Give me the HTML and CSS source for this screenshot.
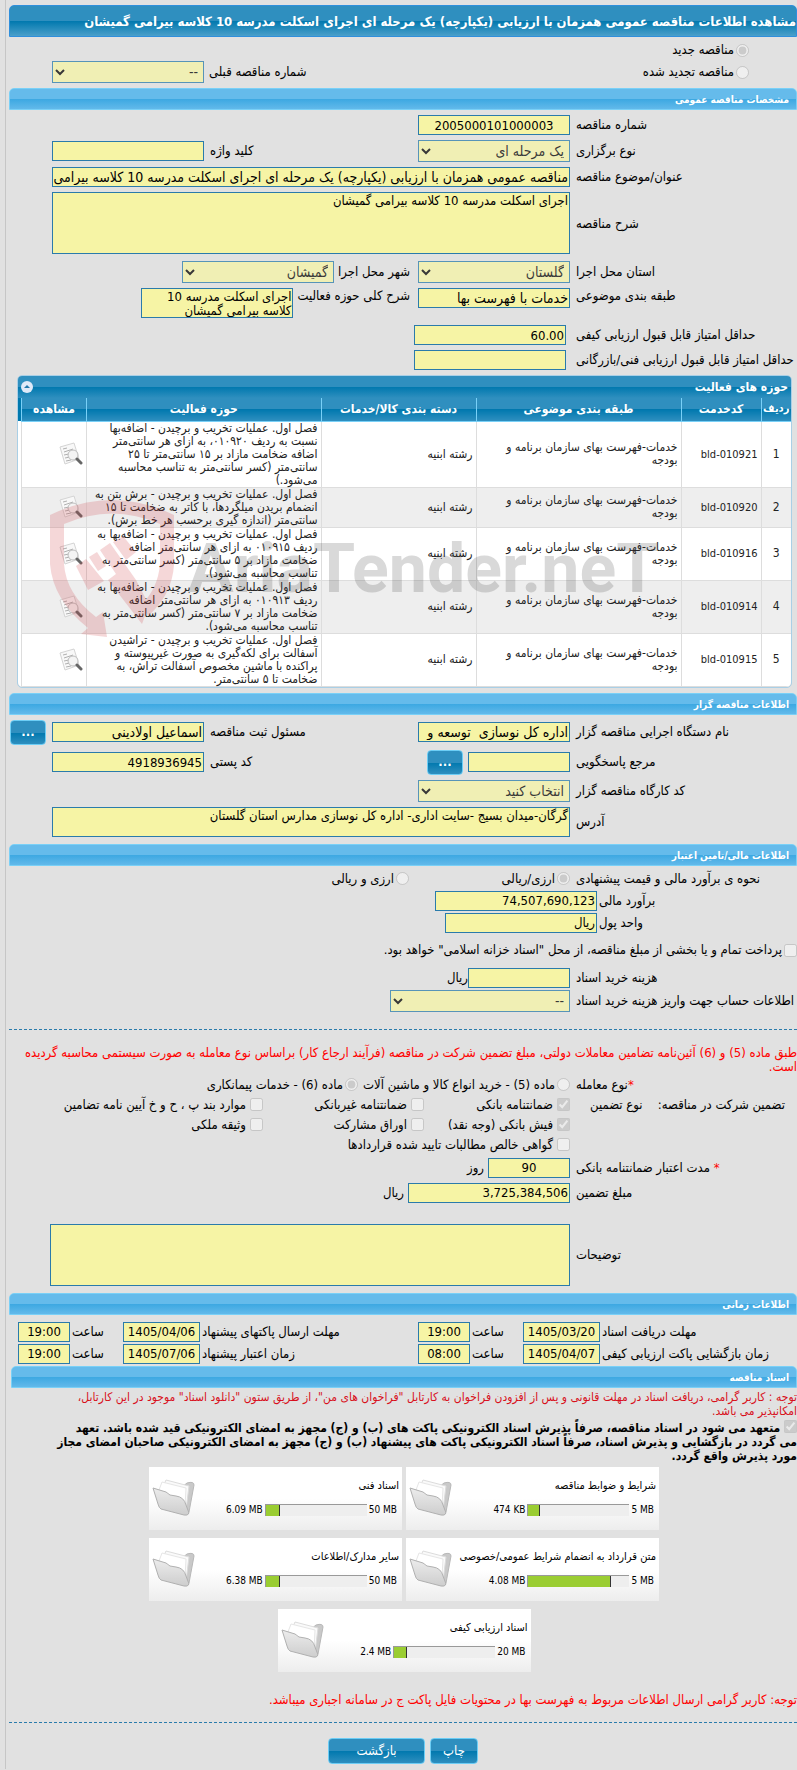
FILE: index.html
```html
<!DOCTYPE html>
<html lang="fa" dir="rtl">
<head>
<meta charset="utf-8">
<meta name="viewport" content="width=device-width, initial-scale=1">
<title>مشاهده اطلاعات مناقصه عمومی</title>
<link rel="stylesheet" href="styles.css">
</head>
<body>
<svg class="defs" width="0" height="0" aria-hidden="true">
  <defs>
    <linearGradient id="fold" x1="0" y1="0" x2="0" y2="1"><stop offset="0" stop-color="#ececec"/><stop offset="1" stop-color="#cdcdcd"/></linearGradient>
    <symbol id="folder" viewBox="0 0 44 40">
      <path d="M30 8 35 4Q42 2 42 6L37 33 34 36 28 30Z" fill="#c9c9c9" stroke="#b8b8b8"/>
      <path d="M10 10 14 1 37 7 34 31 14 26Z" fill="#fafafa" stroke="#dcdcdc"/>
      <path d="M7 11 10 3 34 9 33 28Z" fill="#fff" stroke="#e6e6e6"/>
      <path d="M1 9 14 13Q17 17 24 17 32 18 34 26L37 34Q36 37 32 36L9 30Q7 29 6 25Z" fill="url(#fold)" stroke="#b0b0b0"/>
    </symbol>
    <symbol id="view" viewBox="0 0 24 24">
      <path d="M1 5 15 1 20 17 6 22Z" fill="#f8f8f8" stroke="#d4d4d4"/>
      <path d="M4 7 8 6M5 10 14 7M5 13 10 12M6 16 11 15M7 19 12 18" stroke="#b0b0b0" fill="none"/>
      <circle cx="14" cy="13" r="5" fill="#f2f2f2" fill-opacity=".8" stroke="#bdbdbd"/>
      <path d="M18 17 22 21" stroke="#666" stroke-width="3" stroke-linecap="round"/>
    </symbol>
  </defs>
</svg>
<main class="page">
  <h1 class="title">مشاهده اطلاعات مناقصه عمومی همزمان با ارزیابی (یکپارچه) یک مرحله ای اجرای اسکلت مدرسه 10 کلاسه بیرامی گمیشان</h1>

  <section class="kind">
    <label class="opt"><input type="radio" name="kind" checked disabled>مناقصه جدید</label>
    <div class="kind-row">
      <label class="opt"><input type="radio" name="kind" disabled>مناقصه تجدید شده</label>
      <label class="push" for="prev">شماره مناقصه قبلی</label>
      <select class="w-field" id="prev" disabled><option>--</option></select>
    </div>
  </section>

  <h2 class="bar">مشخصات مناقصه عمومی</h2>
  <section class="form">
    <div class="row"><label for="num">شماره مناقصه</label><input class="center" id="num" value="2005000101000003" readonly></div>
    <div class="row">
      <label for="type">نوع برگزاری</label><select id="type" disabled><option>یک مرحله ای</option></select>
      <label for="key">کلید واژه</label><input id="key" readonly>
    </div>
    <div class="row"><label for="subj">عنوان/موضوع مناقصه</label><input class="wide fa" id="subj" value="مناقصه عمومی همزمان با ارزیابی (یکپارچه) یک مرحله ای اجرای اسکلت مدرسه 10 کلاسه بیرامی گمیشان" readonly></div>
    <div class="row"><label for="desc">شرح مناقصه</label><textarea class="wide tall" id="desc" readonly>اجرای اسکلت مدرسه 10 کلاسه بیرامی گمیشان</textarea></div>
    <div class="row">
      <label for="prov">استان محل اجرا</label><select id="prov" disabled><option>گلستان</option></select>
      <div class="rest"><label for="city">شهر محل اجرا</label><select class="w-field" id="city" disabled><option>گمیشان</option></select></div>
    </div>
    <div class="row top">
      <label for="class">طبقه بندی موضوعی</label><input class="fa" id="class" value="خدمات با فهرست بها" readonly>
      <div class="rest top"><label for="scope">شرح کلی حوزه فعالیت</label><textarea class="w-field" id="scope" readonly>اجرای اسکلت مدرسه 10 کلاسه بیرامی گمیشان</textarea></div>
    </div>
    <div class="row score"><label for="q1">حداقل امتیاز قابل قبول ارزیابی کیفی</label><input id="q1" value="60.00" readonly></div>
    <div class="row score"><label for="q2">حداقل امتیاز قابل قبول ارزیابی فنی/بازرگانی</label><input id="q2" readonly></div>
  </section>

  <section class="panel">
    <header class="panel-head">
      <h2>حوزه های فعالیت</h2>
      <button class="fold" type="button" aria-label="بستن"><svg width="12" height="12" viewBox="0 0 12 12"><circle cx="6" cy="6" r="6" fill="#dfe9f8"/><path d="M3 7 6 4 9 7Z" fill="#2277aa"/></svg></button>
    </header>
    <div class="grid-wrap">
      <table class="areas">
        <colgroup><col class="c1"><col class="c2"><col class="c3"><col class="c4"><col class="c5"><col class="c6"></colgroup>
        <thead><tr><th>ردیف</th><th>کدخدمت</th><th>طبقه بندی موضوعی</th><th>دسته بندی کالا/خدمات</th><th>حوزه فعالیت</th><th>مشاهده</th></tr></thead>
        <tbody>
          <tr><td>1</td><td>bld-010921</td><td>خدمات-فهرست بهای سازمان برنامه و<br>بودجه</td><td>رشته ابنیه</td><td>فصل اول. عملیات تخریب و برچیدن - اضافه‌بها<br>نسبت به ردیف ۰۱۰۹۲۰، به ازای هر سانتی‌متر<br>اضافه ضخامت مازاد بر ۱۵ سانتی‌متر تا ۲۵<br>سانتی‌متر (کسر سانتی‌متر به تناسب محاسبه<br>می‌شود.)</td><td><svg class="doc"><use href="#view"/></svg></td></tr>
          <tr><td>2</td><td>bld-010920</td><td>خدمات-فهرست بهای سازمان برنامه و<br>بودجه</td><td>رشته ابنیه</td><td>فصل اول. عملیات تخریب و برچیدن - برش بتن به<br>انضمام بریدن میلگردها، با کاتر به ضخامت تا ۱۵<br>سانتی‌متر (اندازه گیری برحسب هر خط برش).</td><td><svg class="doc"><use href="#view"/></svg></td></tr>
          <tr><td>3</td><td>bld-010916</td><td>خدمات-فهرست بهای سازمان برنامه و<br>بودجه</td><td>رشته ابنیه</td><td>فصل اول. عملیات تخریب و برچیدن - اضافه‌بها به<br>ردیف ۰۱۰۹۱۵ به ازای هر سانتی‌متر اضافه<br>ضخامت مازاد بر ۵ سانتی‌متر (کسر سانتی‌متر به<br>تناسب محاسبه می‌شود).</td><td><svg class="doc"><use href="#view"/></svg></td></tr>
          <tr><td>4</td><td>bld-010914</td><td>خدمات-فهرست بهای سازمان برنامه و<br>بودجه</td><td>رشته ابنیه</td><td>فصل اول. عملیات تخریب و برچیدن - اضافه‌بها به<br>ردیف ۰۱۰۹۱۳ به ازای هر سانتی‌متر اضافه<br>ضخامت مازاد بر ۷ سانتی‌متر (کسر سانتی‌متر به<br>تناسب محاسبه می‌شود).</td><td><svg class="doc"><use href="#view"/></svg></td></tr>
          <tr><td>5</td><td>bld-010915</td><td>خدمات-فهرست بهای سازمان برنامه و<br>بودجه</td><td>رشته ابنیه</td><td>فصل اول. عملیات تخریب و برچیدن - تراشیدن<br>آسفالت برای لکه‌گیری به صورت غیرپیوسته و<br>پراکنده با ماشین مخصوص آسفالت تراش، به<br>ضخامت تا ۵ سانتی‌متر.</td><td><svg class="doc"><use href="#view"/></svg></td></tr>
        </tbody>
      </table>
    </div>
    <div class="mark" dir="ltr">
      <svg width="124" height="138" viewBox="0 0 124 138" fill="#cf3b42">
        <path d="M0 15Q62-15 124 15V65Q122 95 98 116L92 104Q108 88 110 64V24Q62 3 14 24V64Q16 94 46 117L53 112 57 137 31 134 38 128Q3 100 0 64Z"/>
        <path d="M26 66 36 59 54 81 38 90ZM39 57 47 52 56 66 48 71ZM50 50 60 43 86 80 99 105 92 124 58 80 66 74ZM63 42 73 36 86 52 76 60Z"/>
      </svg>
      <span>AriaTender.neT</span>
    </div>
  </section>

  <h2 class="bar">اطلاعات مناقصه گزار</h2>
  <section class="form org">
    <div class="row">
      <label for="org">نام دستگاه اجرایی مناقصه گزار</label><input class="fa" id="org" value="اداره کل نوسازی  توسعه و" readonly>
      <label for="who">مسئول ثبت مناقصه</label><input class="fa" id="who" value="اسماعیل اولادینی" readonly>
      <button class="btn dots" type="button">...</button>
    </div>
    <div class="row">
      <label for="ref">مرجع پاسخگویی</label>
      <div class="pair"><input class="w-ref" id="ref" readonly><button class="btn dots" type="button">...</button></div>
      <label for="zip">کد پستی</label><input id="zip" value="4918936945" readonly>
    </div>
    <div class="row"><label for="shop">کد کارگاه مناقصه گزار</label><select id="shop" disabled><option>انتخاب کنید</option></select></div>
    <div class="row"><label for="addr">آدرس</label><textarea class="wide" id="addr" readonly>گرگان-میدان بسیج -سایت اداری- اداره کل نوسازی مدارس استان گلستان</textarea></div>
  </section>

  <h2 class="bar">اطلاعات مالی/تامین اعتبار</h2>
  <section class="money">
    <div class="line"><span class="lab">نحوه ی برآورد مالی و قیمت پیشنهادی</span>
      <div class="opts"><label class="opt"><input type="radio" name="cur" checked disabled>ارزی/ریالی</label><label class="opt"><input type="radio" name="cur" disabled>ارزی و ریالی</label></div></div>
    <div class="line near"><label class="lab" for="est">برآورد مالی</label><input class="w-est" id="est" value="74,507,690,123" readonly></div>
    <div class="line near"><label class="lab" for="unit">واحد پول</label><input class="w-field" id="unit" value="ریال" readonly></div>
    <label class="opt bond"><input type="checkbox" disabled>پرداخت تمام و یا بخشی از مبلغ مناقصه، از محل "اسناد خزانه اسلامی" خواهد بود.</label>
    <div class="line"><label class="lab" for="fee">هزینه خرید اسناد</label><div class="unit"><input class="w-ref" id="fee" readonly>ریال</div></div>
    <div class="line"><label class="lab" for="acc">اطلاعات حساب جهت واریز هزینه خرید اسناد</label><select class="w-acc" id="acc" disabled><option>--</option></select></div>
  </section>

  <hr>
  <p class="note rule">طبق ماده (5) و (6) آئین‌نامه تضامین معاملات دولتی، مبلغ تضمین شرکت در مناقصه (فرآیند ارجاع کار) براساس نوع معامله به صورت سیستمی محاسبه گردیده<br>است.</p>

  <section class="bail">
    <div class="line"><span class="lab"><b class="star">*</b>نوع معامله</span>
      <div class="opts deal"><label class="opt"><input type="radio" name="deal" disabled>ماده (5) - خرید انواع کالا و ماشین آلات</label><label class="opt"><input type="radio" name="deal" checked disabled>ماده (6) - خدمات پیمانکاری</label></div></div>
    <div class="checks">
      <span class="lead"><span>تضمین شرکت در مناقصه:</span><span>نوع تضمین</span></span>
      <div class="boxes">
        <label class="opt"><input type="checkbox" checked disabled>ضمانتنامه بانکی</label>
        <label class="opt"><input type="checkbox" disabled>ضمانتنامه غیربانکی</label>
        <label class="opt"><input type="checkbox" disabled>موارد بند پ ، ح و خ آیین نامه تضامین</label>
        <label class="opt"><input type="checkbox" checked disabled>فیش بانکی (وجه نقد)</label>
        <label class="opt"><input type="checkbox" disabled>اوراق مشارکت</label>
        <label class="opt"><input type="checkbox" disabled>وثیقه ملکی</label>
        <label class="opt all"><input type="checkbox" disabled>گواهی خالص مطالبات تایید شده قراردادها</label>
      </div>
    </div>
    <div class="line"><label class="lab" for="days"><b class="star">*</b>&nbsp;مدت اعتبار ضمانتنامه بانکی</label><div class="unit gap"><input class="w-days center" id="days" value="90" readonly>روز</div></div>
    <div class="line"><label class="lab" for="amount">مبلغ تضمین</label><div class="unit gap"><input class="w-est" id="amount" value="3,725,384,506" readonly>ریال</div></div>
    <div class="line remark"><label class="lab" for="remark">توضیحات</label><textarea class="tall" id="remark" readonly></textarea></div>
  </section>

  <h2 class="bar">اطلاعات زمانی</h2>
  <section class="times">
    <label for="d1">مهلت دریافت اسناد</label><input id="d1" value="1405/03/20" readonly><label for="t1">ساعت</label><input id="t1" value="19:00" readonly>
    <label for="d2">مهلت ارسال پاکتهای پیشنهاد</label><input id="d2" value="1405/04/06" readonly><label for="t2">ساعت</label><input id="t2" value="19:00" readonly>
    <label for="d3">زمان بازگشایی پاکت ارزیابی کیفی</label><input id="d3" value="1405/04/07" readonly><label for="t3">ساعت</label><input id="t3" value="08:00" readonly>
    <label for="d4">زمان اعتبار پیشنهاد</label><input id="d4" value="1405/07/06" readonly><label for="t4">ساعت</label><input id="t4" value="19:00" readonly>
  </section>

  <section class="docs">
    <h2 class="bar">اسناد مناقصه</h2>
    <p class="note crimson">توجه : کاربر گرامی، دریافت اسناد در مهلت قانونی و پس از افزودن فراخوان به کارتابل "فراخوان های من"، از طریق ستون "دانلود اسناد" موجود در این کارتابل،<br>امکانپذیر می باشد.</p>
    <label class="pledge"><input type="checkbox" checked disabled> متعهد می شود در اسناد مناقصه، صرفاً پذیرش اسناد الکترونیکی پاکت های (ب) و (ج) مجهز به امضای الکترونیکی قید شده باشد. تعهد<br>می گردد در بازگشایی و پذیرش اسناد، صرفاً اسناد الکترونیکی پاکت های پیشنهاد (ب) و (ج) مجهز به امضای الکترونیکی صاحبان امضای مجاز<br>مورد پذیرش واقع گردد.</label>
    <div class="cards">
      <article class="card"><div class="info"><h3>شرایط و ضوابط مناقصه</h3><div class="usage"><span dir="ltr">5 MB</span><div class="meter"><i style="width:11%"></i></div><span dir="ltr">474 KB</span></div></div><svg class="folder"><use href="#folder"/></svg></article>
      <article class="card"><div class="info"><h3>اسناد فنی</h3><div class="usage"><span dir="ltr">50 MB</span><div class="meter"><i style="width:14%"></i></div><span dir="ltr">6.09 MB</span></div></div><svg class="folder"><use href="#folder"/></svg></article>
      <article class="card"><div class="info"><h3>متن قرارداد به انضمام شرایط عمومی/خصوصی</h3><div class="usage"><span dir="ltr">5 MB</span><div class="meter"><i style="width:82%"></i></div><span dir="ltr">4.08 MB</span></div></div><svg class="folder"><use href="#folder"/></svg></article>
      <article class="card"><div class="info"><h3>سایر مدارک/اطلاعات</h3><div class="usage"><span dir="ltr">50 MB</span><div class="meter"><i style="width:14%"></i></div><span dir="ltr">6.38 MB</span></div></div><svg class="folder"><use href="#folder"/></svg></article>
      <article class="card"><div class="info"><h3>اسناد ارزیابی کیفی</h3><div class="usage"><span dir="ltr">20 MB</span><div class="meter"><i style="width:13%"></i></div><span dir="ltr">2.4 MB</span></div></div><svg class="folder"><use href="#folder"/></svg></article>
    </div>
    <p class="note last">توجه: کاربر گرامی ارسال اطلاعات مربوط به فهرست بها در محتویات فایل پاکت ج در سامانه اجباری میباشد.</p>
  </section>
  <hr>
  <footer class="actions"><button class="btn print" type="button">چاپ</button><button class="btn back" type="button">بازگشت</button></footer>
</main>
</body>
</html>
```
FILE: styles.css
```css
* { box-sizing: border-box; }
body {
  margin: 0;
  background: #e1e1e1;
  color: #000;
  font: 13px/14px "DejaVu Sans Condensed", "DejaVu Sans", sans-serif;
}
.defs { position: absolute; }
.page {
  margin-left: 5px;
  padding: 5px 0 5px 3px;
  border-left: 1px solid #c6c6c6;
  overflow: hidden;
}
h1, h2, h3, p { margin: 0; }
input, select, textarea, button { font: 13px/14px "DejaVu Sans Condensed", "DejaVu Sans", sans-serif; margin: 0; }
input:not([type]), textarea {
  display: block;
  min-width: 0;
  height: 20px;
  padding: 1px;
  border: 1px solid #2a7bab;
  border-radius: 0;
  background: #f6f4a5;
  color: #000;
  outline: 0;
}
textarea { height: 30px; resize: none; overflow: hidden; }
input.fa:not([type]), select { font-size: 14px; }
textarea.tall { height: 62px; }
select {
  height: 22px;
  min-width: 0;
  padding: 0 1px;
  border: 1px solid #2a7bab;
  border-radius: 0;
  background-color: #f6f4a5;
  color: #000;
  opacity: .75;
}
input[type=radio], input[type=checkbox] { width: 13px; height: 13px; flex: none; }
.center { text-align: center; }
.w-field { width: 152px; }
.w-ref { width: 102px; }
.w-est { width: 162px; }
.w-acc { width: 180px; }
.w-days { width: 82px; }

.title {
  height: 32px;
  border: 1px solid #2f8fdc;
  border-radius: 5px 5px 0 0;
  background: linear-gradient(#2f8fbf 50%, #0078ae 50%, #4a9fca);
  color: #fff;
  font-size: 13px;
  line-height: 32px;
  white-space: nowrap;
}
.bar {
  height: 22px;
  padding: 0 7px;
  border: 1px solid #79d0f7;
  border-radius: 5px 5px 0 0;
  background: linear-gradient(#65bbeb 50%, #3ca8e2 50%, #62b9ea);
  color: #fff;
  font-size: 10px;
  line-height: 22px;
}
.opt { display: flex; align-items: center; gap: 2px; white-space: nowrap; }

.kind { padding: 2px 48px 5px 43px; }
.kind > .opt { height: 22px; }
.kind-row { display: flex; align-items: center; gap: 5px; }
.kind-row .push { margin-right: auto; }

.form { display: flex; flex-direction: column; gap: 5px; padding: 5px 0; }
.row {
  display: grid;
  grid-template-columns: 221fr 152px 202fr 152px 37px;
  gap: 6px;
  align-items: center;
}
.row > label, .lab { display: flex; justify-content: flex-end; white-space: nowrap; }
.row .wide { grid-column: 2 / span 3; }
.row .wide.tall { margin-bottom: 2px; }
.top { align-items: start; }
.top label { padding-top: 1px; }
.row.top { padding-bottom: 2px; }
.rest { display: flex; grid-column: 3 / -1; gap: 4px; align-items: center; padding-right: 2px; }
.rest.top { align-items: start; }
.score input { margin-right: 4px; margin-left: -4px; }

.panel { position: relative; margin: 0 5px 5px 8px; border: 1px solid #a9cfe6; border-radius: 5px; }
.panel-head {
  display: flex;
  justify-content: space-between;
  align-items: center;
  height: 22px;
  padding: 0 3px;
  border-radius: 4px 4px 0 0;
  background: linear-gradient(#2f8fbf 50%, #0078ae 50%, #2f8fbf);
  color: #fff;
}
.panel-head h2 { font-size: 12px; }
.fold { display: flex; padding: 0; border: 0; background: none; }
.grid-wrap { padding-left: 3px; border-radius: 0 0 5px 5px; background: linear-gradient(#0078ae 23px, #fff 23px); overflow: hidden; }
.areas { width: 100%; table-layout: fixed; border-collapse: collapse; color: #222; font-size: 12px; }
.c1 { width: 30px; }
.c2 { width: 80px; }
.c3 { width: 205px; }
.c4 { width: 155px; }
.c6 { width: 65px; }
.areas th {
  height: 23px;
  padding: 0;
  border: 1px solid #79d0f7;
  border-width: 0 0 1px 1px;
  background: linear-gradient(#2f8fbf 50%, #0078ae 50%, #2f8fbf);
  color: #fff;
  font-size: 12px;
  white-space: nowrap;
}
.areas th:first-child { font-size: 11px; }
.areas td { padding: 0 3px; border: 1px solid #ddd; border-width: 0 0 1px 1px; line-height: 13px; white-space: nowrap; }
.areas td:first-child { text-align: center; }
.areas td:nth-child(2) { font-size: 11px; }
.areas tbody tr:nth-child(even) { background: #eee; }
.doc { display: block; width: 24px; height: 24px; }
.mark {
  position: absolute;
  top: 124px;
  left: 32px;
  display: flex;
  align-items: center;
  gap: 14px;
  opacity: .2;
  pointer-events: none;
}
.mark span { color: #444; font: 700 68px/90px Roboto, sans-serif; }

.btn {
  padding: 0;
  border: 1px solid #6ccdf5;
  border-radius: 4px;
  background: linear-gradient(#2f8fbf 50%, #0078ae 50%, #2f8fbf);
  color: #fff;
}
.dots { width: 36px; height: 25px; font-weight: 700; }
.org .row { min-height: 22px; }
.org { padding-bottom: 7px; }
.pair { display: flex; align-items: center; gap: 5px; }

.money { display: flex; flex-direction: column; gap: 2px; padding: 3px 0 17px; }
.line { display: grid; grid-template-columns: 221fr 561fr; gap: 6px; align-items: center; min-height: 20px; }
.near { grid-template-columns: 198fr 588fr; gap: 2px; }
.opts { display: flex; }
.opts .opt:first-child { min-width: 161px; }
.deal .opt:first-child { min-width: 212px; }
.bond { height: 31px; }
.unit { display: flex; align-items: center; }
.unit.gap { gap: 4px; }
hr { height: 1px; margin: 0; border: 0; background: repeating-linear-gradient(to right, #2a7bab 0 3px, transparent 3px 5px); }
.note { color: #f00; white-space: nowrap; }
.rule { padding: 16px 0 1px; }
.star { color: #f00; font-weight: 400; }

.bail { display: flex; flex-direction: column; padding-bottom: 7px; }
.checks { display: grid; grid-template-columns: 221fr 561fr; gap: 6px; }
.lead { display: flex; justify-content: space-between; height: 20px; padding: 3px 12px 0 14px; white-space: nowrap; }
.boxes { display: grid; grid-template-columns: 146px 161px auto; justify-content: start; grid-auto-rows: 20px; }
.boxes .opt { gap: 4px; }
.boxes .all { grid-column: 1 / -1; }
.bail .checks + .line { padding: 3px 0 5px; }
.remark { margin-top: 21px; }
.remark textarea { width: 520px; max-width: 100%; }

.times {
  display: grid;
  grid-template-columns: 195fr 77px 49fr 52px 214fr 77px 49fr 52px;
  gap: 2px;
  align-items: center;
  padding: 7px 0 2px 9px;
}
.times label { display: flex; justify-content: flex-end; white-space: nowrap; }
.times input { width: 100%; text-align: center; }

.docs { padding-left: 2px; }
.crimson { padding-top: 2px; color: #d8101c; font-size: 12px; }
.pledge { display: block; padding: 2px 0 4px; font-size: 12px; font-weight: 700; white-space: nowrap; }
.pledge input { vertical-align: -1px; }
.cards { display: flex; flex-wrap: wrap; justify-content: center; gap: 8px 4px; max-width: 560px; margin: 0 auto; }
.card {
  display: flex;
  justify-content: space-between;
  width: 253px;
  height: 63px;
  padding: 12px 3px 0;
  background: linear-gradient(#fff 50%, #ededed);
}
.card h3 { height: 14px; font-size: 11px; font-weight: 400; line-height: 14px; white-space: nowrap; }
.info { display: flex; flex-direction: column; gap: 11px; width: 200px; font-size: 10px; }
.usage { display: flex; align-items: center; gap: 2px; padding-right: 2px; line-height: 12px; white-space: nowrap; }
.meter { display: flex; direction: ltr; width: 102px; height: 12px; border: 1px solid #999; border-width: 1px 0 0 1px; background: #eee; }
.meter i { border-right: 1px solid #333; background: #9acd32; }
.folder { flex: none; width: 44px; height: 40px; }
.last { padding: 21px 0 15px; }
.actions { display: flex; justify-content: center; gap: 5px; padding-top: 15px; }
.actions .btn { height: 26px; }
.print { width: 48px; }
.back { width: 97px; }
```
